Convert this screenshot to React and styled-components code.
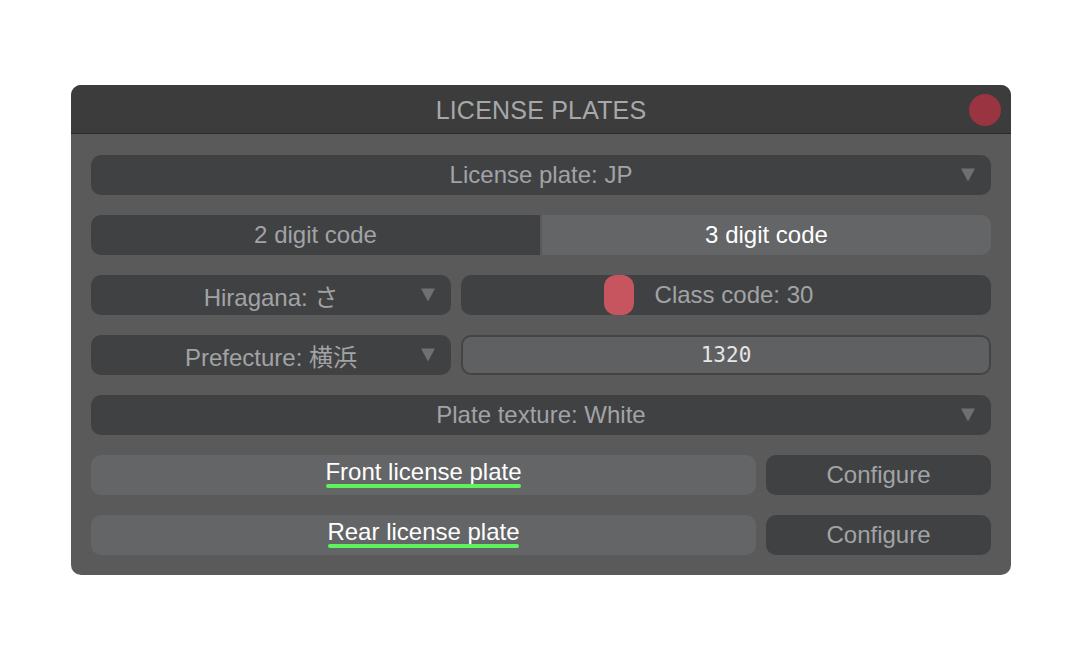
import styled, { createGlobalStyle } from "styled-components";

const GlobalStyle = createGlobalStyle`
  body {
    margin: 0;
    background: #ffffff;
    font-family: "Liberation Sans", "Noto Sans CJK JP", Arial, sans-serif;
  }
`;

const Page = styled.div`
  padding: 85px 0 0 71px;
`;

const Panel = styled.div`
  width: 940px;
  background: #5a5a5a;
  border-radius: 10px;
  overflow: hidden;
`;

const Header = styled.div`
  height: 48px;
  background: #3c3c3c;
  border-bottom: 1px solid #2b2b2b;
  display: grid;
  grid-template-columns: 1fr auto 1fr;
  align-items: center;
  padding: 0 10px;
`;

const Title = styled.div`
  grid-column: 2;
  color: #a7a8aa;
  font-size: 25px;
  letter-spacing: 0.2px;
  padding-top: 2px;
`;

const Close = styled.button`
  grid-column: 3;
  justify-self: end;
  width: 32px;
  height: 32px;
  margin-top: 2px;
  border: none;
  border-radius: 50%;
  background: #9a3441;
  padding: 0;
`;

const Body = styled.div`
  padding: 21px 20px 20px;
  display: flex;
  flex-direction: column;
  gap: 20px;
`;

const Row = styled.div`
  display: flex;
  gap: ${(p) => p.gap ?? 10}px;
  height: 40px;
`;

const Control = styled.div`
  position: relative;
  flex: ${(p) => (p.width ? `0 0 ${p.width}px` : "1 1 0")};
  display: flex;
  align-items: center;
  justify-content: center;
  background: ${(p) => (p.active ? "#646567" : "#404143")};
  color: ${(p) => (p.active ? "#ffffff" : "#a2a3a5")};
  border-radius: ${(p) => p.radius ?? "10px"};
  font-size: 24px;
  box-sizing: border-box;
`;

const Arrow = styled.span`
  position: absolute;
  right: 16px;
  top: 50%;
  transform: translateY(-50%);
  width: 0;
  height: 0;
  border-left: 7px solid transparent;
  border-right: 7px solid transparent;
  border-top: 13px solid #6f7072;
`;

const Thumb = styled.div`
  position: absolute;
  top: 0;
  width: 30px;
  height: 40px;
  border-radius: 12px;
  background: #c65560;
`;

const SliderLabel = styled.span`
  padding-left: 16px;
`;

const Input = styled.div`
  flex: 1 1 0;
  display: flex;
  align-items: center;
  justify-content: center;
  background: #5f6062;
  border: 2px solid #434446;
  border-radius: 10px;
  color: #e6e6e6;
  font-family: "DejaVu Sans Mono", "Liberation Mono", monospace;
  font-size: 21px;
`;

const ToggleLabel = styled.span`
  display: inline-flex;
  flex-direction: column;
  gap: 0;
  line-height: 24px;
  margin-top: -2px;
`;

const GreenBar = styled.span`
  height: 4px;
  margin: 0 1px;
  border-radius: 2px;
  background: #5ef25e;
`;

function Dropdown({ label, width }) {
  return (
    <Control width={width}>
      {label}
      <Arrow />
    </Control>
  );
}

function ClassSlider({ value, min, max }) {
  const pct = (value - min) / (max - min);
  return (
    <Control>
      <Thumb style={{ left: `calc(${pct * 100}% - ${pct * 30}px)` }} />
      <SliderLabel>Class code: {value}</SliderLabel>
    </Control>
  );
}

function PlateRow({ label }) {
  return (
    <Row>
      <Control active>
        <ToggleLabel>
          {label}
          <GreenBar />
        </ToggleLabel>
      </Control>
      <Control width={225}>Configure</Control>
    </Row>
  );
}

export default function App() {
  return (
    <>
      <GlobalStyle />
      <Page>
        <Panel>
          <Header>
            <Title>LICENSE PLATES</Title>
            <Close aria-label="close" />
          </Header>
          <Body>
            <Row>
              <Dropdown label="License plate: JP" />
            </Row>
            <Row gap={2}>
              <Control radius="10px 0 0 10px">2 digit code</Control>
              <Control active radius="0 10px 10px 0">
                3 digit code
              </Control>
            </Row>
            <Row>
              <Dropdown label="Hiragana: さ" width={360} />
              <ClassSlider value={30} min={10} max={80} />
            </Row>
            <Row>
              <Dropdown label="Prefecture: 横浜" width={360} />
              <Input>1320</Input>
            </Row>
            <Row>
              <Dropdown label="Plate texture: White" />
            </Row>
            <PlateRow label="Front license plate" />
            <PlateRow label="Rear license plate" />
          </Body>
        </Panel>
      </Page>
    </>
  );
}
